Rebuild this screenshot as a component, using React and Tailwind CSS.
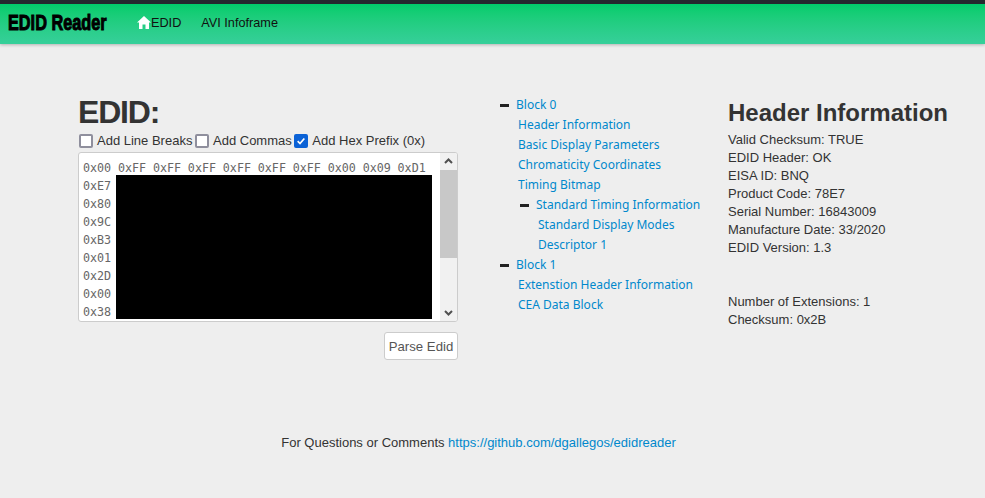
import React from "react";

const Check = ({ checked, label }) => (
  <label className="flex items-center">
    <span className={`w-[14px] h-[14px] rounded-[2px] border-2 flex items-center justify-center ${checked ? "bg-[#0b62d6] border-[#0b62d6]" : "bg-white border-[#8f8f9d]"}`}>
      {checked && (
        <svg width="12" height="12" viewBox="0 0 12 12" fill="none"><path d="M2 6.2 4.8 9 10 3" stroke="#fff" strokeWidth="2" /></svg>
      )}
    </span>
    <span className="ml-[4px]">{label}</span>
  </label>
);

const Tree = ({ children, className = "" }) => (
  <a className={`block h-[20px] leading-[20px] text-[#0088cc] ${className}`}>{children}</a>
);

const Dash = ({ className = "" }) => <span className={`w-[9px] h-[3px] bg-[#222] block ${className}`} />;

const codes = ["0xE7", "0x80", "0x9C", "0xB3", "0x01", "0x2D", "0x00", "0x38"];
const first = ["0x00", "0xFF", "0xFF", "0xFF", "0xFF", "0xFF", "0xFF", "0x00", "0x09", "0xD1"];
const info = ["Valid Checksum: TRUE", "EDID Header: OK", "EISA ID: BNQ", "Product Code: 78E7", "Serial Number: 16843009", "Manufacture Date: 33/2020", "EDID Version: 1.3"];

export default function App() {
  return (
    <div className="relative w-[985px] h-[498px] bg-[#eeeeee] overflow-hidden font-['Liberation_Sans',sans-serif] text-[13px] text-[#333]">
      <header className="h-[44px] border-t-[4px] border-[#24292e] bg-gradient-to-b from-[#00cc6a] to-[#36cf9a] shadow-[0_1px_3px_rgba(0,0,0,0.25)] flex items-center pl-[8px]">
        <span className="w-[112px] font-bold text-[22px] leading-[24px] -mt-[2px] text-black [-webkit-text-stroke:1px_black] origin-left scale-x-[0.74] whitespace-nowrap">EDID Reader</span>
        <nav className="ml-[17px] -mt-[1px] flex items-center text-[12.7px] text-[#111]">
          <svg width="14" height="13" viewBox="0 0 14 13" className="-mt-[2px]"><path d="M7 0 0 6.5h2V13h3.5V8.5h3V13H12V6.5h2z" fill="#fff" /></svg>
          <span>EDID</span>
          <span className="ml-[20px]">AVI Infoframe</span>
        </nav>
      </header>
      <main className="flex pl-[78px] pt-[51px]">
        <section className="w-[380px] shrink-0">
          <h1 className="font-bold text-[32px] leading-[34px] tracking-[-1.2px] text-[#333]">EDID:</h1>
          <div className="flex gap-[2.6px] mt-[3px] ml-[1px] h-[18px] items-center">
            <Check label="Add Line Breaks" />
            <Check label="Add Commas" />
            <Check checked label="Add Hex Prefix (0x)" />
          </div>
          <div className="mt-[2px] w-[380px] h-[170px] bg-white border border-[#ccc] rounded-[3px] flex overflow-hidden">
            <div className="w-[361px] pt-[6px] pl-[4px] font-['DejaVu_Sans_Mono',monospace] text-[11.7px] leading-[18px] text-[#666]">
              <div className="flex gap-[6.8px] whitespace-nowrap">{first.map((c, i) => <span key={i}>{c}</span>)}</div>
              <div className="flex">
                <div className="w-[33px]">{codes.map(c => <div key={c}>{c}</div>)}</div>
                <div className="w-[316px] h-[144px] -mt-[2px] bg-black" />
              </div>
            </div>
            <div className="w-[17px] ml-auto bg-[#f1f1f1] flex flex-col items-center">
              <svg width="17" height="17" viewBox="0 0 17 17" className="shrink-0"><path d="M5 10l3.5-3.5L12 10" fill="none" stroke="#505050" strokeWidth="2" /></svg>
              <div className="w-full h-[88px] bg-[#c8c8c8]" />
              <div className="flex-1" />
              <svg width="17" height="17" viewBox="0 0 17 17" className="shrink-0"><path d="M5 7l3.5 3.5L12 7" fill="none" stroke="#505050" strokeWidth="2" /></svg>
            </div>
          </div>
          <div className="flex justify-end mt-[10px]">
            <button className="h-[28px] w-[74px] pt-[1px] bg-white border border-[#ccc] rounded-[3px] text-[13.2px] text-[#555]">Parse Edid</button>
          </div>
        </section>
        <nav className="ml-[41px] w-[229px] shrink-0 font-['Noto_Sans',sans-serif] text-[12px]">
          <div className="flex items-center"><Dash className="ml-[1px]" /><Tree className="ml-[7px]">Block 0</Tree></div>
          <div className="pl-[19px]">
            <Tree>Header Information</Tree>
            <Tree>Basic Display Parameters</Tree>
            <Tree>Chromaticity Coordinates</Tree>
            <Tree>Timing Bitmap</Tree>
            <div className="flex items-center pl-[2px]"><Dash /><Tree className="ml-[7px]">Standard Timing Information</Tree></div>
            <div className="pl-[20px]">
              <Tree>Standard Display Modes</Tree>
              <Tree>Descriptor 1</Tree>
            </div>
          </div>
          <div className="flex items-center"><Dash className="ml-[1px]" /><Tree className="ml-[7px]">Block 1</Tree></div>
          <div className="pl-[19px]">
            <Tree>Extenstion Header Information</Tree>
            <Tree>CEA Data Block</Tree>
          </div>
        </nav>
        <aside className="flex-1 mt-[4px]">
          <h2 className="font-bold text-[24px] leading-[28px] text-[#333] whitespace-nowrap">Header Information</h2>
          <div className="mt-[4px] leading-[18px]">
            {info.map(t => <div key={t}>{t}</div>)}
            <div className="mt-[36px]">Number of Extensions: 1</div>
            <div>Checksum: 0x2B</div>
          </div>
        </aside>
      </main>
      <footer className="absolute left-0 top-[434px] w-[957px] text-center leading-[18px]">
        For Questions or Comments <a className="text-[#0088cc]">https://github.com/dgallegos/edidreader</a>
      </footer>
    </div>
  );
}
